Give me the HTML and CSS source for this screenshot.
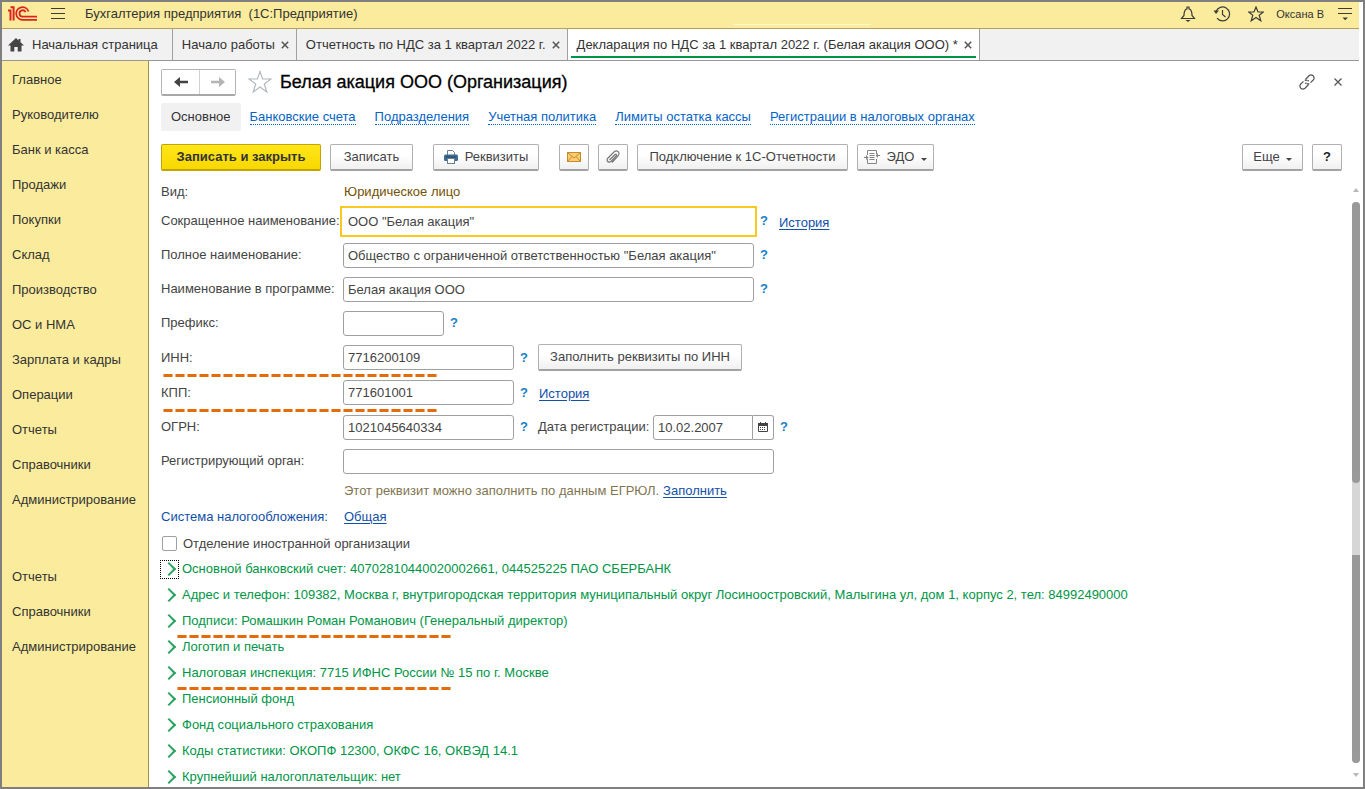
FILE: index.html
```html
<!DOCTYPE html>
<html lang="ru">
<head>
<meta charset="utf-8">
<title>Белая акация ООО (Организация)</title>
<link rel="stylesheet" href="styles.css">
</head>
<body>
<div class="window">
  <header class="topbar">
    <svg class="logo" width="30" height="16" viewBox="0 0 30 16" fill="none" stroke="#dc241f" role="img" aria-label="1С">
      <path d="M0 4.500H2.500V14.500M2.500 1.200H5.600V14.500" stroke-width="2"/>
      <path d="M20.500 5.500A6.300 6.300 0 1 0 14.500 13.800H29" stroke-width="1.800"/>
      <path d="M17.600 6.200A3.200 3.200 0 1 0 14.600 10.700H29" stroke-width="1.800"/>
    </svg>
    <button class="icon-btn menu-btn" aria-label="Меню">
      <svg width="14" height="12" viewBox="0 0 14 12" stroke="#3c3c3c" fill="none"><path d="M0 .5H14M0 5.500H14M0 10.500H14"/></svg>
    </button>
    <span class="app-title">Бухгалтерия предприятия &nbsp;(1С:Предприятие)</span>
    <div class="top-tools">
      <button class="icon-btn" aria-label="Уведомления">
        <svg width="16" height="16" viewBox="0 0 16 16" fill="none" stroke="#3c3c3c" stroke-width="1.200"><path d="M1.500 12.500H14.500L12 9.500Q12 3.500 9 2.800V1H7V2.800Q4 3.500 4 9.500Z"/><path d="M5.500 14H10.500L8 16Z" fill="#3c3c3c" stroke="none"/></svg>
      </button>
      <button class="icon-btn" aria-label="История">
        <svg width="18" height="16" viewBox="0 0 18 16" fill="none" stroke="#3c3c3c"><path d="M3 5.500A7 7 0 1 1 4 12.200M9.500 4V8.500L12.500 11" stroke-width="1.200"/><path d="M.5 4.500H6L3 8Z" fill="#3c3c3c" stroke="none"/></svg>
      </button>
      <button class="icon-btn" aria-label="Избранное">
        <svg width="16" height="16" viewBox="0 0 16 16" fill="none" stroke="#3c3c3c" stroke-width="1.200"><path d="M8 1L10 6H15.300L11.200 9.200L12.800 14.800L8 11.500L3.200 14.800L4.800 9.200L.7 6H6Z"/></svg>
      </button>
      <a class="user" href="#">Оксана В</a>
      <button class="icon-btn" aria-label="Настройки">
        <svg width="14" height="14" viewBox="0 0 14 14" fill="none" stroke="#3c3c3c"><path d="M0 1.500H14M0 6.500H14"/><path d="M4.500 10.500H10L7.200 13.200Z" fill="#3c3c3c" stroke="none"/></svg>
      </button>
    </div>
    <span class="streak"></span>
  </header>

  <nav class="tabs">
    <a class="tab home" href="#">
      <svg width="16" height="14" viewBox="0 0 16 14" fill="#444"><path d="M8 0L0 7.500H2.500V13.500H6.300V9H9.700V13.500H13.500V7.500H16L12.500 4.200V1H10.500V2.400Z"/></svg>
      <span>Начальная страница</span>
    </a>
    <div class="tab"><a href="#">Начало работы</a><button class="icon-btn close" aria-label="Закрыть"><svg width="8" height="8" viewBox="0 0 8 8" stroke="#555" stroke-width="1.500"><path d="M.8 .8L7.200 7.200M7.200 .8L.8 7.200"/></svg></button></div>
    <div class="tab"><a href="#">Отчетность по НДС за 1 квартал 2022 г.</a><button class="icon-btn close" aria-label="Закрыть"><svg width="8" height="8" viewBox="0 0 8 8" stroke="#555" stroke-width="1.500"><path d="M.8 .8L7.200 7.200M7.200 .8L.8 7.200"/></svg></button></div>
    <div class="tab active"><a href="#">Декларация по НДС за 1 квартал 2022 г. (Белая акация ООО) *</a><button class="icon-btn close" aria-label="Закрыть"><svg width="8" height="8" viewBox="0 0 8 8" stroke="#555" stroke-width="1.500"><path d="M.8 .8L7.200 7.200M7.200 .8L.8 7.200"/></svg></button></div>
  </nav>

  <div class="body">
    <aside class="sidebar">
      <a href="#">Главное</a>
      <a href="#">Руководителю</a>
      <a href="#">Банк и касса</a>
      <a href="#">Продажи</a>
      <a href="#">Покупки</a>
      <a href="#">Склад</a>
      <a href="#">Производство</a>
      <a href="#">ОС и НМА</a>
      <a href="#">Зарплата и кадры</a>
      <a href="#">Операции</a>
      <a href="#">Отчеты</a>
      <a href="#">Справочники</a>
      <a href="#">Администрирование</a>
      <div class="second">
        <a href="#">Отчеты</a>
        <a href="#">Справочники</a>
        <a href="#">Администрирование</a>
      </div>
    </aside>

    <main class="main">
      <div class="title-row">
        <div class="history-nav">
          <button aria-label="Назад"><svg width="14" height="10" viewBox="0 0 14 10"><path d="M0 5L6 0V3.700H14V6.300H6V10Z" fill="#444"/></svg></button>
          <button aria-label="Вперед"><svg width="14" height="10" viewBox="0 0 14 10"><path d="M14 5L8 0V3.700H0V6.300H8V10Z" fill="#b4b4b4"/></svg></button>
        </div>
        <button class="icon-btn fav" aria-label="В избранное"><svg width="24" height="24" viewBox="0 0 24 24" fill="none" stroke="#b3b9bf" stroke-width="1.200"><path d="M12 1.500L14.600 9H23L16.300 13.900L18.800 22L12 17.100L5.200 22L7.700 13.900L1 9H9.400Z"/></svg></button>
        <h1>Белая акация ООО (Организация)</h1>
        <div class="title-tools">
          <button class="icon-btn" aria-label="Ссылка"><svg width="16" height="16" viewBox="0 0 16 16" fill="none" stroke="#555" stroke-width="1.200"><path d="M6.500 5.500L10 1.800Q12 0 14.200 1.800Q16 4 14.200 6L11.500 8.700M10.300 9.600Q9 10.300 7.800 9.600M9.500 10.500L6 14.200Q4 16 1.800 14.200Q0 12 1.800 10L4.500 7.300M5.700 6.400Q7 5.700 8.200 6.400M6.200 9.800L7.400 8.600M8.600 7.400L9.800 6.200"/></svg></button>
          <button class="icon-btn" aria-label="Закрыть"><svg width="8" height="8" viewBox="0 0 8 8" stroke="#555" stroke-width="1.300"><path d="M.5 .5L7.500 7.500M7.500 .5L.5 7.500"/></svg></button>
        </div>
      </div>

      <nav class="sections">
        <a class="current" href="#">Основное</a>
        <a href="#"><span>Банковские счета</span></a>
        <a href="#"><span>Подразделения</span></a>
        <a href="#"><span>Учетная политика</span></a>
        <a href="#"><span>Лимиты остатка кассы</span></a>
        <a href="#"><span>Регистрации в налоговых органах</span></a>
      </nav>

      <div class="toolbar">
        <button class="btn primary">Записать и закрыть</button>
        <button class="btn save">Записать</button>
        <button class="btn print"><svg width="14" height="14" viewBox="0 0 14 14"><path d="M3.500 5V.5H8.500L10.500 2.500V5" fill="#fff" stroke="#6d7f8f"/><rect y="4.500" width="14" height="6.500" rx="1.500" fill="#3c6c94"/><path d="M2 7H12" stroke="#24455f"/><rect x="3.500" y="8.500" width="7" height="5" fill="#fff" stroke="#6d7f8f"/></svg>Реквизиты</button>
        <button class="btn square mail" aria-label="Письмо"><svg width="14" height="10" viewBox="0 0 14 10" fill="#f9cd72" stroke="#c98a2b"><rect x=".5" y=".5" width="13" height="9"/><path d="M.5 .5L7 6L13.500 .5M.5 9.500L5 4.500M13.500 9.500L9 4.500" fill="none"/></svg></button>
        <button class="btn square" aria-label="Файлы"><svg width="14" height="14" viewBox="0 0 14 14" fill="none" stroke="#777" stroke-width="1.200"><path d="M3.500 10L9 4.500Q10.500 3.600 10.500 5.300L5.500 11Q3 13 1.700 11.500Q.3 10 2 8L8.500 1.500Q10.500 .2 12.200 1.700Q13.800 3.500 12.300 5.500L6 12.500"/></svg></button>
        <button class="btn connect">Подключение к 1С-Отчетности</button>
        <button class="btn edo"><svg width="16" height="14" viewBox="0 0 16 14" fill="none" stroke="#858585"><path d="M3.500 5V.5H12.500V4M3.500 9V13.500H12.500V9M5.500 3.500H10.500M5.500 5.500H10.500M5.500 7.500H10.500M5.500 9.500H10.500M0 7.500H3.500M12 5.500H16"/><path d="M2 5V10L4.500 7.500ZM14 3V8L11.500 5.500Z" fill="#858585" stroke="none"/></svg>ЭДО<i class="caret"></i></button>
        <button class="btn more">Еще<i class="caret"></i></button>
        <button class="btn square help">?</button>
      </div>

      <div class="content">
        <form class="form">
          <div class="row short"><span class="label">Вид:</span><span class="kind">Юридическое лицо</span></div>
          <div class="row"><label class="label" for="f1">Сокращенное наименование:</label><input id="f1" class="long focused" value='ООО "Белая акация"'><a class="q" href="#">?</a><a class="link" href="#">История</a></div>
          <div class="row"><label class="label" for="f2">Полное наименование:</label><input id="f2" class="long" value='Общество с ограниченной ответственностью "Белая акация"'><a class="q" href="#">?</a></div>
          <div class="row"><label class="label" for="f3">Наименование в программе:</label><input id="f3" class="long" value="Белая акация ООО"><a class="q" href="#">?</a></div>
          <div class="row"><label class="label" for="f4">Префикс:</label><input id="f4" class="prefix"><a class="q" href="#">?</a></div>
          <div class="row tall marked"><label class="label" for="f5">ИНН:</label><input id="f5" class="code" value="7716200109"><a class="q" href="#">?</a><button type="button" class="btn fill">Заполнить реквизиты по ИНН</button></div>
          <div class="row tall marked"><label class="label" for="f6">КПП:</label><input id="f6" class="code" value="771601001"><a class="q" href="#">?</a><a class="link" href="#">История</a></div>
          <div class="row"><label class="label" for="f7">ОГРН:</label><input id="f7" class="code" value="1021045640334"><a class="q" href="#">?</a><label class="date-label" for="f8">Дата регистрации:</label><span class="date"><input id="f8" value="10.02.2007"><button type="button" aria-label="Календарь"><svg width="10" height="10" viewBox="0 0 10 10"><path d="M.5 1.500H9.500V9.500H.5Z" fill="#fff" stroke="#444"/><path d="M0 1H10V4H0Z" fill="#444"/><path d="M2.500 0V2M7.500 0V2" stroke="#444"/><path d="M2 5.500H8M2 7.500H8" stroke="#444" stroke-dasharray="1 1"/></svg></button></span><a class="q" href="#">?</a></div>
          <div class="row"><label class="label" for="f9">Регистрирующий орган:</label><input id="f9" class="organ"></div>
          <div class="row short indent"><span class="hint">Этот реквизит можно заполнить по данным ЕГРЮЛ.</span><a class="link fill-link" href="#">Заполнить</a></div>
          <div class="row tax"><span class="label blue">Система налогообложения:</span><a class="link tax-link" href="#">Общая</a></div>
          <div class="row short"><input type="checkbox" id="f10"><label class="check-label" for="f10">Отделение иностранной организации</label></div>
          <div class="groups">
            <button type="button" class="group current"><span class="chevron"></span>Основной банковский счет: 40702810440020002661, 044525225 ПАО СБЕРБАНК</button>
            <button type="button" class="group"><span class="chevron"></span>Адрес и телефон: 109382, Москва г, внутригородская территория муниципальный округ Лосиноостровский, Малыгина ул, дом 1, корпус 2, тел: 84992490000</button>
            <button type="button" class="group marked"><span class="chevron"></span>Подписи: Ромашкин Роман Романович (Генеральный директор)</button>
            <button type="button" class="group"><span class="chevron"></span>Логотип и печать</button>
            <button type="button" class="group marked"><span class="chevron"></span>Налоговая инспекция: 7715 ИФНС России № 15 по г. Москве</button>
            <button type="button" class="group"><span class="chevron"></span>Пенсионный фонд</button>
            <button type="button" class="group"><span class="chevron"></span>Фонд социального страхования</button>
            <button type="button" class="group"><span class="chevron"></span>Коды статистики: ОКОПФ 12300, ОКФС 16, ОКВЭД 14.1</button>
            <button type="button" class="group"><span class="chevron"></span>Крупнейший налогоплательщик: нет</button>
          </div>
        </form>
        <div class="scroll">
          <i class="up"></i>
          <div class="track"><i class="thumb first"></i><i class="thumb second-thumb"></i></div>
          <i class="down"></i>
        </div>
      </div>
    </main>
  </div>
</div>
</body>
</html>
```
FILE: styles.css
```css
* { box-sizing: border-box; }
body { margin: 0; font: 13px/16px "Liberation Sans", Arial, sans-serif; color: #444; background: #fff; }
button, input { font: inherit; color: inherit; margin: 0; }
a { color: inherit; text-decoration: none; }
svg { display: block; flex: none; }
button { cursor: pointer; }

.window { height: 100vh; display: flex; flex-direction: column; border: 2px solid #7f7f7f; overflow: hidden; }
.icon-btn { display: flex; align-items: center; justify-content: center; border: 0; padding: 0; background: none; }

.topbar { position: relative; display: flex; align-items: center; flex: none; height: 27px; margin-right: 4px; padding: 0 7px 2px 6px; background: #fbec9d; border-bottom: 1px solid #b5a15b; color: #333; }
.menu-btn { margin: 0 20px 0 13px; }
.top-tools { display: flex; align-items: center; gap: 17px; margin-left: auto; }
.user { font-size: 11px; margin: 0 -3px 0 -5px; }
.streak { position: absolute; left: 731px; bottom: 3px; width: 138px; height: 1px; background: #fdf6d0; }

.tabs { display: flex; flex: none; height: 32px; margin-right: 4px; background: #f1f1f1; border-bottom: 1px solid #969696; color: #333; }
.tab { display: flex; align-items: center; gap: 6px; padding: 0 7px 0 9px; border-right: 1px solid #a0a0a0; white-space: nowrap; }
.tab.home { gap: 8px; padding: 0 14px 0 6px; }
.tab.active { position: relative; background: #fff; }
.tab.active::after { content: ""; position: absolute; left: 3px; right: 3px; bottom: 2px; height: 2px; background: #009646; }

.body { display: flex; flex: 1; min-height: 0; }
.sidebar { flex: none; width: 147px; padding: 1px 0 0 10px; background: #fbec9d; border-right: 1px solid #a09352; color: #333; }
.sidebar a { display: block; line-height: 35px; }
.second { margin-top: 42px; }

.main { flex: 1; min-width: 0; display: flex; flex-direction: column; padding: 7px 0 0 12px; }
.title-row { display: flex; align-items: center; flex: none; height: 28px; padding-right: 21px; }
.history-nav { display: flex; height: 27px; border: 1px solid #b4b4b4; border-bottom: 2px solid #a8a8a8; border-radius: 2px; }
.history-nav button { display: flex; align-items: center; justify-content: center; width: 37px; padding: 0; border: 0; background: #fff; }
.history-nav button + button { width: 36px; border-left: 1px solid #d0d0d0; }
.fav { margin: 0 8px 0 12px; }
h1 { margin: 0; font-size: 18px; line-height: 24px; font-weight: 400; color: #000; -webkit-text-stroke: 0.3px #000; }
.title-tools { display: flex; align-items: center; gap: 19px; margin-left: auto; }

.sections { display: flex; align-items: center; flex: none; gap: 19px; height: 28px; margin-top: 7px; color: #0463c6; }
.sections .current { padding: 6px 10px; margin-right: -10px; background: #f1f1f1; border-radius: 2px; color: #333; }
.sections span { display: block; line-height: 15px; border-bottom: 1px dotted #0463c6; }

.toolbar { display: flex; flex: none; margin: 13px 21px 0 0; }
.btn { display: flex; align-items: center; justify-content: center; flex: none; height: 27px; padding: 0; border: 1px solid #b0b0b0; border-bottom: 2px solid #a2a2a2; border-radius: 2px; background: linear-gradient(#fff 40%, #f0f0f0); color: #444; }
.primary { width: 160px; margin-right: 9px; background: linear-gradient(#ffe61a, #f8d800); border-color: #c4a400; font-weight: 700; color: #333; }
.save { width: 83px; margin-right: 20px; }
.print { width: 106px; gap: 7px; margin-right: 20px; }
.square { width: 30px; }
.mail { margin-right: 9px; }
.connect { width: 211px; margin: 0 9px; }
.edo { width: 77px; gap: 7px; }
.more { width: 61px; gap: 6px; margin: 0 9px 0 auto; }
.help { font-weight: 700; color: #222; }
.caret { border: 3px solid transparent; border-top-color: #444; border-bottom: 0; margin-top: 4px; }

.content { display: flex; flex: 1; min-height: 0; margin-top: 8px; }
.form { flex: 1; min-width: 0; }
.row { position: relative; display: flex; align-items: center; height: 34px; white-space: nowrap; }
.row.short { height: 25px; }
.row.tall { height: 35px; }
.row.tax { height: 28px; }
.label { width: 182px; flex: none; }
.kind { color: #735100; padding-left: 1px; }
.row input { height: 25px; padding: 0 4px; border: 1px solid #a0a0a0; border-radius: 3px; background: #fff; outline: none; }
.row .long { width: 411px; }
.row .focused { width: 417px; height: 31px; margin: 0 -3px; padding: 0 6px; border: 2px solid #fac81e; border-radius: 0; }
.row .prefix { width: 101px; }
.row .code { width: 171px; }
.row .organ { width: 431px; }
.q { width: 24px; padding-left: 6px; font-weight: 700; color: #1a7fc4; }
.link { color: #1350a8; text-decoration: underline; text-underline-offset: 2px; padding: 3px 0 0 1px; }
.fill { width: 204px; }
.date-label { width: 115px; }
.date { display: flex; width: 121px; }
.date input { flex: 1; min-width: 0; border-radius: 3px 0 0 3px; }
.date button { display: flex; align-items: center; justify-content: center; width: 21px; padding: 0; border: 1px solid #a0a0a0; border-left: 0; border-radius: 0 3px 3px 0; background: #fff; }
.indent { padding-left: 183px; }
.hint { color: #7f7650; }
.fill-link { padding: 0; margin-left: 4px; }
.blue { color: #1350a8; }
.tax-link { padding-top: 0; }
.row input[type="checkbox"] { appearance: none; width: 15px; height: 15px; padding: 0; border-radius: 2px; margin: 0 6px 0 1px; }

.groups { display: flex; flex-direction: column; align-items: flex-start; }
.group { position: relative; display: flex; align-items: center; gap: 4px; height: 26px; padding: 0; border: 0; background: none; color: #009646; white-space: nowrap; }
.chevron { display: flex; align-items: center; justify-content: center; width: 17px; height: 17px; }
.chevron::before { content: ""; width: 8px; height: 8px; margin-left: -2px; border: solid #26a360; border-width: 2px 2px 0 0; transform: rotate(45deg); }
.group.current .chevron { outline: 1px dotted #000; }
.marked::after { content: ""; position: absolute; left: 2px; bottom: -2px; width: 274px; height: 3px; background: repeating-linear-gradient(90deg, #f0ab78 0 1px, #e46c0a 1px 9px, #f0ab78 9px 10px, transparent 10px 12px); }
.group.marked::after { left: 16px; bottom: -4px; }

.scroll { display: flex; flex-direction: column; align-items: center; flex: none; width: 8px; margin: 9px 3px 10px 0; }
.up, .down { border: 3px solid transparent; }
.up { border-top: 0; border-bottom: 4px solid #b8b8b8; }
.down { border-bottom: 0; border-top: 4px solid #b8b8b8; }
.track { display: flex; flex-direction: column; justify-content: space-between; flex: 1; width: 8px; margin: 10px 0; background: #d6d6d6; border-radius: 4px; }
.thumb { background: #999; }
.first { height: 50%; border-radius: 4px; }
.second-thumb { height: 37%; border-radius: 0 0 4px 4px; }
```
